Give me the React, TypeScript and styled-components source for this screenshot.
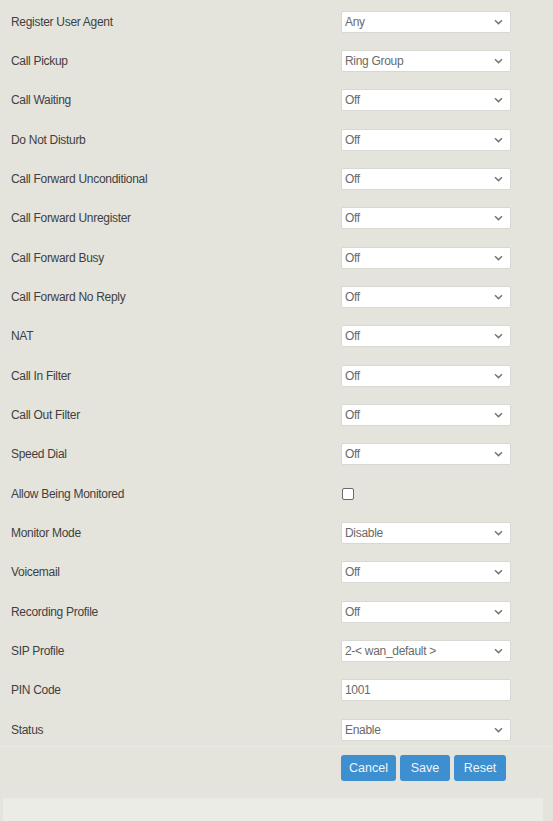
import * as React from "react";
import styled, { createGlobalStyle } from "styled-components";

const GlobalStyle = createGlobalStyle`
    html, body {
        margin: 0;
        padding: 0;
        background: #e4e4dd;
    }
    body {
        font-family: "Liberation Sans", Arial, sans-serif;
    }
`;

type Field =
    | { label: string; kind: "select"; value: string }
    | { label: string; kind: "check" }
    | { label: string; kind: "text"; value: string };

const fields: Field[] = [
    { label: "Register User Agent", kind: "select", value: "Any" },
    { label: "Call Pickup", kind: "select", value: "Ring Group" },
    { label: "Call Waiting", kind: "select", value: "Off" },
    { label: "Do Not Disturb", kind: "select", value: "Off" },
    { label: "Call Forward Unconditional", kind: "select", value: "Off" },
    { label: "Call Forward Unregister", kind: "select", value: "Off" },
    { label: "Call Forward Busy", kind: "select", value: "Off" },
    { label: "Call Forward No Reply", kind: "select", value: "Off" },
    { label: "NAT", kind: "select", value: "Off" },
    { label: "Call In Filter", kind: "select", value: "Off" },
    { label: "Call Out Filter", kind: "select", value: "Off" },
    { label: "Speed Dial", kind: "select", value: "Off" },
    { label: "Allow Being Monitored", kind: "check" },
    { label: "Monitor Mode", kind: "select", value: "Disable" },
    { label: "Voicemail", kind: "select", value: "Off" },
    { label: "Recording Profile", kind: "select", value: "Off" },
    { label: "SIP Profile", kind: "select", value: "2-< wan_default >" },
    { label: "PIN Code", kind: "text", value: "1001" },
    { label: "Status", kind: "select", value: "Enable" },
];

const Chevron = () => (
    <svg width="9" height="6" viewBox="0 0 9 6">
        <path d="M1 1.2 L4.5 4.6 L8 1.2" fill="none" stroke="#777" strokeWidth="1.5" />
    </svg>
);

const App: React.FC = () => {
    return (
        <>
            <GlobalStyle />
            <Page>
                <Form>
                    {fields.map((f) => (
                        <Row key={f.label}>
                            <Label>{f.label}</Label>
                            {f.kind === "select" && (
                                <SelectBox>
                                    <span>{f.value}</span>
                                    <Chevron />
                                </SelectBox>
                            )}
                            {f.kind === "text" && (
                                <TextBox type="text" defaultValue={f.value} />
                            )}
                            {f.kind === "check" && <CheckBox />}
                        </Row>
                    ))}
                </Form>
                <Footer>
                    <Button $w={55}>Cancel</Button>
                    <Button $w={50}>Save</Button>
                    <Button $w={52}>Reset</Button>
                </Footer>
                <Bottom />
            </Page>
        </>
    );
};

const Page = styled.div`
    min-height: 821px;
    display: flex;
    flex-direction: column;
    padding-top: 2px;
    box-sizing: border-box;
`;

const Form = styled.div`
    display: grid;
    grid-auto-rows: 39.33px;
`;

const Row = styled.div`
    display: grid;
    grid-template-columns: 330px 170px;
    align-items: center;
    padding-left: 11px;
`;

const Label = styled.div`
    font-size: 12px;
    letter-spacing: -0.3px;
    color: #3f3f3f;
`;

const SelectBox = styled.div`
    height: 22px;
    box-sizing: border-box;
    background: #fff;
    border: 1px solid #d8d8d2;
    border-radius: 2px;
    display: flex;
    align-items: center;
    justify-content: space-between;
    padding: 0 7px 0 3px;
    font-size: 12px;
    letter-spacing: -0.3px;
    color: #6a6a6a;
`;

const TextBox = styled.input`
    height: 22px;
    width: 170px;
    box-sizing: border-box;
    background: #fff;
    border: 1px solid #d8d8d2;
    border-radius: 2px;
    padding: 0 3px;
    font-family: "Liberation Sans", Arial, sans-serif;
    font-size: 12px;
    letter-spacing: -0.3px;
    color: #6a6a6a;
    outline: 0;
`;

const CheckBox = styled.div`
    width: 10px;
    height: 10px;
    margin-left: 1px;
    border: 1px solid #6a6a6a;
    border-radius: 2px;
    background: #fff;
`;

const Footer = styled.div`
    display: flex;
    gap: 4px;
    padding: 8px 0 17px 341px;
    border-top: 1px solid #ebebe5;
    margin-top: -3px;
`;

const Button = styled.button<{ $w: number }>`
    width: ${(p) => p.$w}px;
    height: 26px;
    padding: 0;
    border: 0;
    border-radius: 3px;
    background: #3d8fcf;
    color: #eef5fb;
    font-family: "Liberation Sans", Arial, sans-serif;
    font-size: 12.5px;
    cursor: pointer;
`;

const Bottom = styled.div`
    flex: 1;
    margin: 0 10px 0 3px;
    background: #ecece6;
`;

export default App;
